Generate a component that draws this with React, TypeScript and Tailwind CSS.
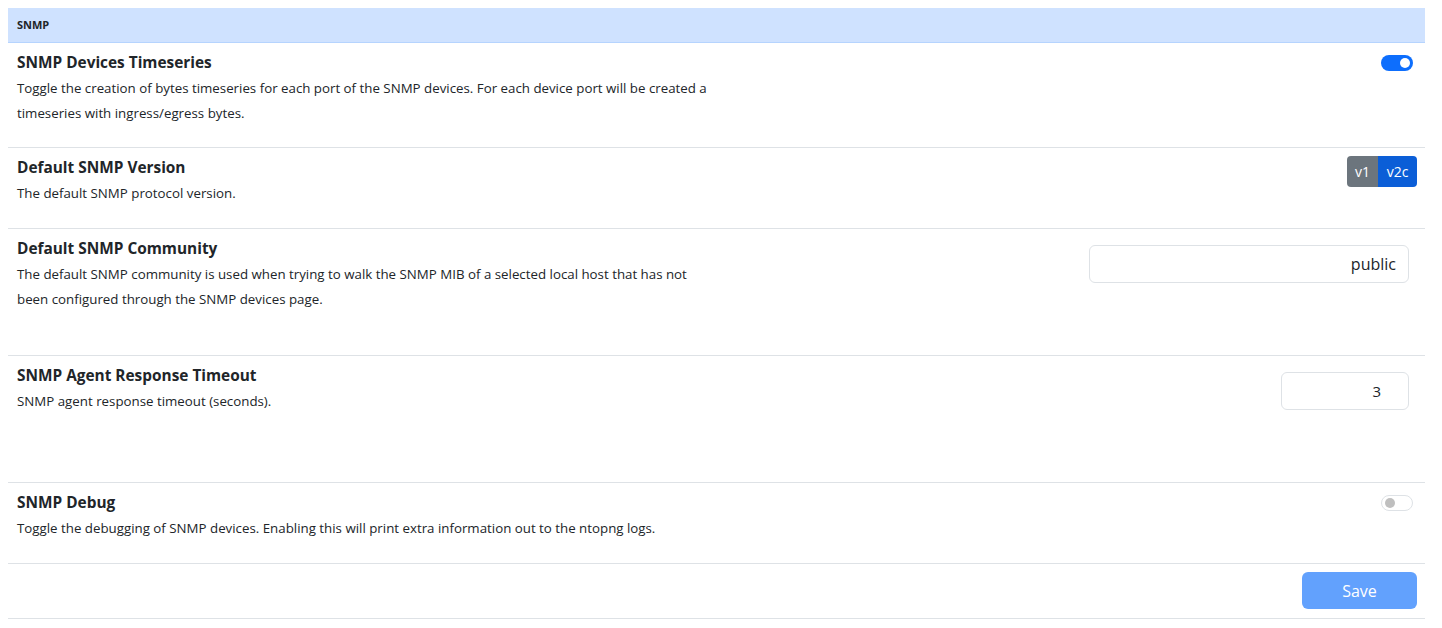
import React from 'react'

const font = { fontFamily: '"Open Sans", "Noto Sans", sans-serif' }

function Toggle({ on }: { on: boolean }) {
    return on ? (
        <div className="w-[32px] h-[16px] rounded-full bg-[#0d6efd] flex items-center justify-end pr-[3px]">
            <div className="w-[10px] h-[10px] rounded-full bg-white" />
        </div>
    ) : (
        <div className="w-[32px] h-[16px] rounded-full bg-white border border-[#dee2e6] flex items-center pl-[3px]">
            <div className="w-[10px] h-[10px] rounded-full bg-[#bfbfbf]" />
        </div>
    )
}

function Row({ title, desc, right, h, rightClass }: { title: string; desc: React.ReactNode; right: React.ReactNode; h: string; rightClass: string }) {
    return (
        <div className={`flex border-b border-[#dee2e6] ${h}`}>
            <div className="pl-[9px] pt-[9px] flex-1">
                <div className="text-[15.4px] font-bold leading-[22px] text-[#212529]">{title}</div>
                <div className="mt-[2px] text-[13.3px] leading-[25px] text-[#212529]">{desc}</div>
            </div>
            <div className={rightClass}>{right}</div>
        </div>
    )
}

export default function App() {
    return (
        <div className="bg-white min-h-screen p-[8px] pr-[17px]" style={font}>
            {/* header */}
            <div className="h-[35px] bg-[#cfe2ff] border-b border-[#b6d4fe] flex items-center pl-[9px]">
                <span className="text-[11px] font-bold text-[#212529]">SNMP</span>
            </div>

            <Row
                h="h-[105px]"
                title="SNMP Devices Timeseries"
                desc={<>Toggle the creation of bytes timeseries for each port of the SNMP devices. For each device port will be created a<br />timeseries with ingress/egress bytes.</>}
                right={<Toggle on />}
                rightClass="pt-[12px] pr-[12px]"
            />
            <Row
                h="h-[81px]"
                title="Default SNMP Version"
                desc="The default SNMP protocol version."
                right={
                    <div className="flex rounded-[4px] overflow-hidden text-[14px] text-white h-[31px]">
                        <div className="bg-[#6c757d] w-[31px] flex items-center justify-center">v1</div>
                        <div className="bg-[#0b5ed7] w-[39px] flex items-center justify-center">v2c</div>
                    </div>
                }
                rightClass="pt-[8px] pr-[8px]"
            />
            <Row
                h="h-[127px]"
                title="Default SNMP Community"
                desc={<>The default SNMP community is used when trying to walk the SNMP MIB of a selected local host that has not<br />been configured through the SNMP devices page.</>}
                right={
                    <div className="w-[320px] h-[38px] border border-[#dee2e6] rounded-[6px] flex items-center justify-end pr-[12px] text-[16px] text-[#212529]">
                        public
                    </div>
                }
                rightClass="pt-[16px] pr-[16px]"
            />
            <Row
                h="h-[127px]"
                title="SNMP Agent Response Timeout"
                desc="SNMP agent response timeout (seconds)."
                right={
                    <div className="w-[128px] h-[38px] border border-[#dee2e6] rounded-[6px] flex items-center justify-end pr-[27px] text-[15px] text-[#212529]">
                        3
                    </div>
                }
                rightClass="pt-[16px] pr-[16px]"
            />
            <Row
                h="h-[81px]"
                title="SNMP Debug"
                desc="Toggle the debugging of SNMP devices. Enabling this will print extra information out to the ntopng logs."
                right={<Toggle on={false} />}
                rightClass="pt-[12px] pr-[12px]"
            />

            {/* footer */}
            <div className="h-[55px] border-b border-[#dee2e6] flex justify-end pt-[8px] pr-[8px]">
                <div className="w-[115px] h-[37px] rounded-[6px] bg-[#62a1fd] text-white text-[16px] flex items-center justify-center">
                    Save
                </div>
            </div>
        </div>
    )
}
